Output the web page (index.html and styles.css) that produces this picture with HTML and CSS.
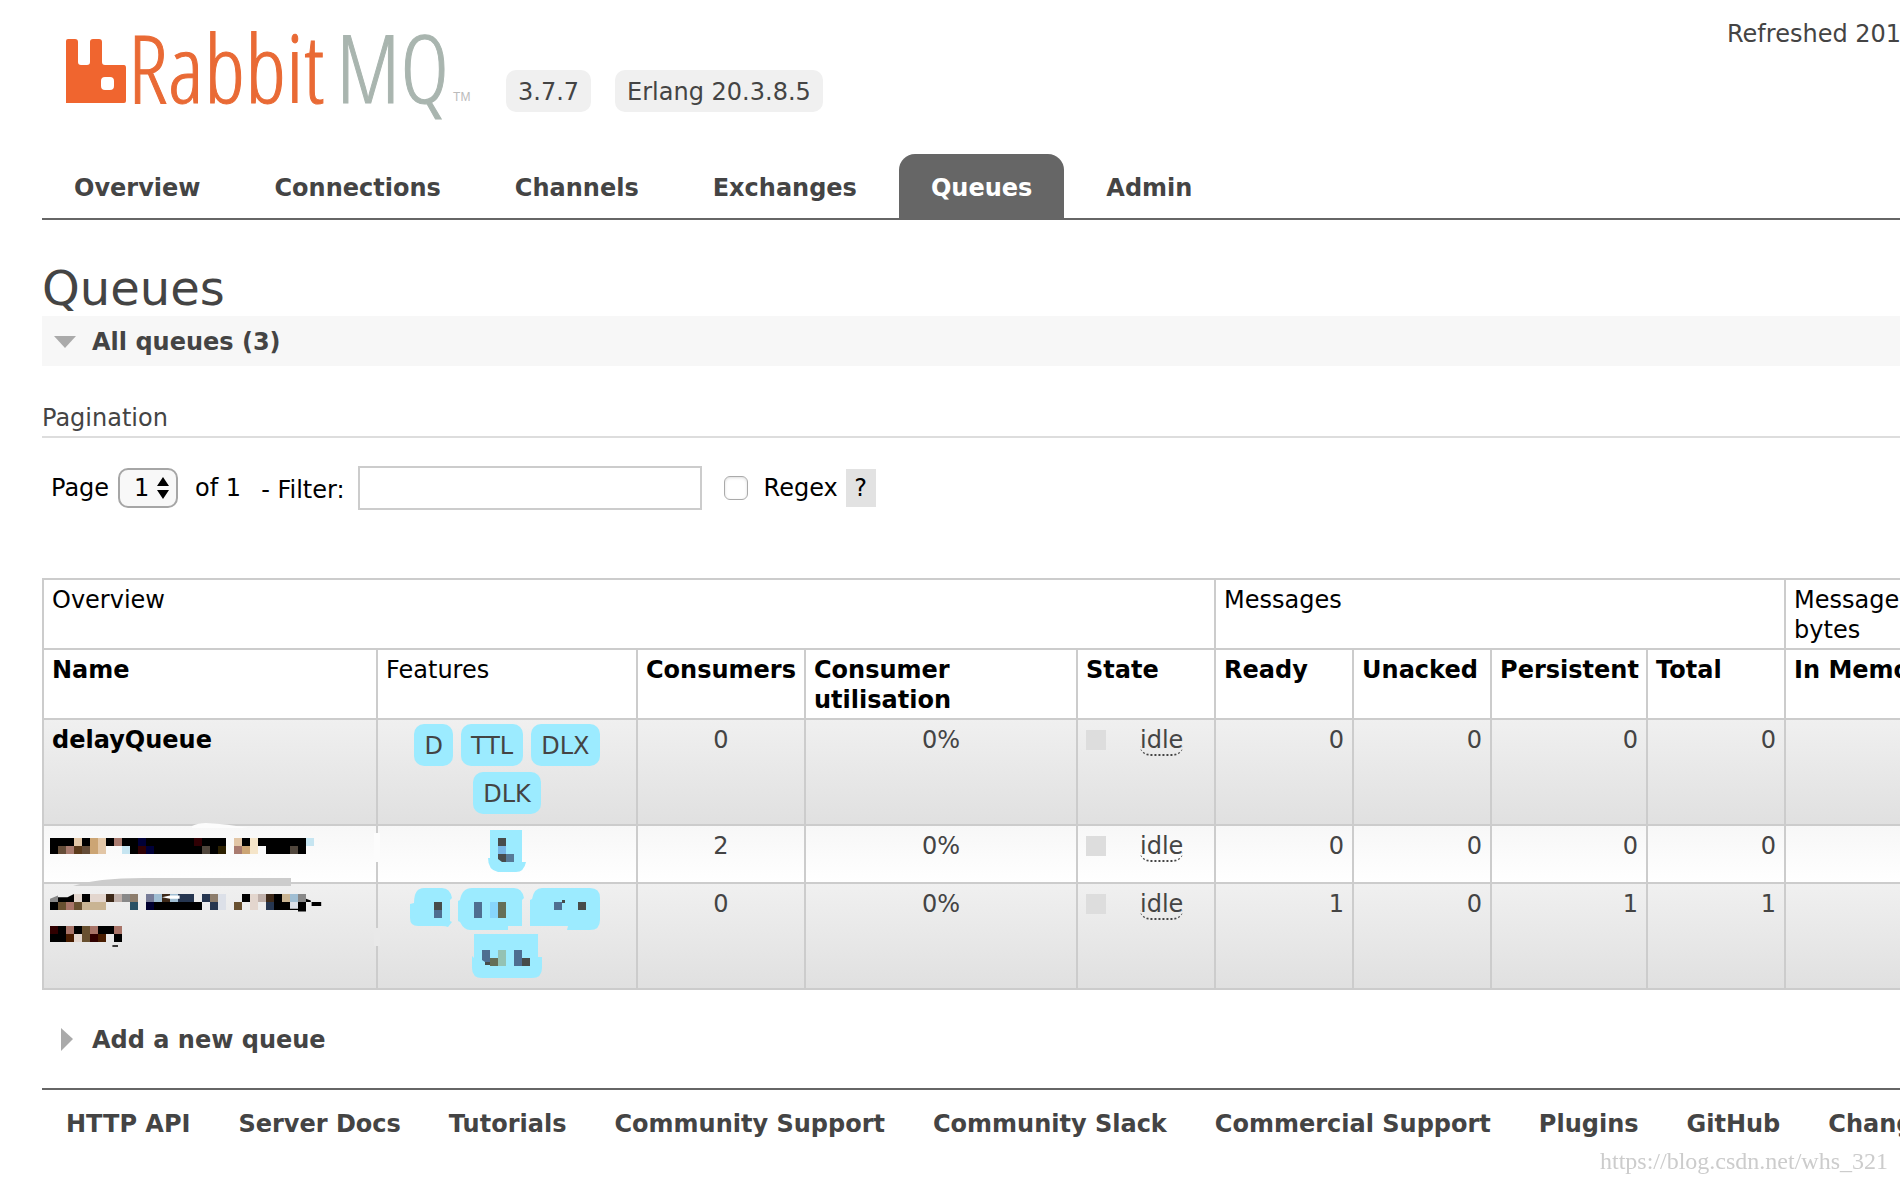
FILE: index.html
```html
<!DOCTYPE html>
<html lang="en">
<head>
<meta charset="utf-8">
<title>RabbitMQ Management</title>
<link rel="stylesheet" href="styles.css">
</head>
<body>
<header class="top">
  <a class="logo" href="#" aria-label="RabbitMQ">
    <svg class="logo-mark" viewBox="0 0 60 66" aria-hidden="true"><path fill="#f0652f" fill-rule="evenodd" d="M2 1H9Q12 1 12 4V24Q12 27 15 27H21Q24 27 24 24V4Q24 1 27 1H33Q36 1 36 4V24Q36 27 39 27H58Q60 27 60 30V63Q60 65 58 65H0V3Q0 1 2 1ZM39 39Q35 39 35 43V48Q35 52 39 52H44Q48 52 48 48V43Q48 39 44 39Z"/></svg>
    <span class="word word-rabbit">Rabbit</span><span class="word word-mq">MQ</span><span class="tm">TM</span>
  </a>
  <div class="versions"><span class="version">3.7.7</span><span class="version">Erlang 20.3.8.5</span></div>
  <div class="status">Refreshed 201</div>
</header>

<nav class="tabs">
  <a href="#">Overview</a>
  <a href="#">Connections</a>
  <a href="#">Channels</a>
  <a href="#">Exchanges</a>
  <a class="selected" href="#">Queues</a>
  <a href="#">Admin</a>
</nav>

<main>
  <h1>Queues</h1>
  <h2 class="section open"><button type="button"><svg class="arrow" viewBox="0 0 24 24" aria-hidden="true"><path fill="#aaa" d="M1 6H23L12 18Z"/></svg>All queues (3)</button></h2>

  <h3>Pagination</h3>
  <form class="filter">
    <label for="page">Page</label>
    <span class="select-box">
      <select id="page"><option>1</option></select>
      <svg viewBox="0 0 12 22" aria-hidden="true"><path d="M6 0L12 9H0ZM6 22L0 13H12Z"/></svg>
    </span>
    <span class="page-count">of 1</span>
    <label class="filter-label" for="name">- Filter:</label>
    <input class="filter-text" id="name" type="text">
    <input class="regex-box" id="regex" type="checkbox">
    <label class="regex-label" for="regex">Regex</label>
    <button class="help" type="button">?</button>
  </form>

  <table class="list">
    <colgroup>
      <col class="c-name"><col class="c-features"><col class="c-consumers"><col class="c-util"><col class="c-num"><col class="c-num"><col class="c-num"><col class="c-persistent"><col class="c-num"><col>
    </colgroup>
    <thead>
      <tr><th class="plain" colspan="5">Overview</th><th class="plain" colspan="4">Messages</th><th class="plain">Message bytes</th></tr>
      <tr><th>Name</th><th class="plain">Features</th><th>Consumers</th><th>Consumer utilisation</th><th>State</th><th>Ready</th><th>Unacked</th><th>Persistent</th><th>Total</th><th class="nowrap">In Memory</th></tr>
    </thead>
    <tbody>
      <tr class="alt">
        <td class="name"><a href="#">delayQueue</a></td>
        <td class="features"><div class="tags"><span>D</span><span>TTL</span><span>DLX</span><span>DLK</span></div></td>
        <td class="c">0</td><td class="c">0%</td>
        <td class="state"><i></i><abbr>idle</abbr></td>
        <td class="r">0</td><td class="r">0</td><td class="r">0</td><td class="r">0</td><td></td>
      </tr>
      <tr>
        <td class="hidden-name">
          <svg class="mosaic one" viewBox="0 0 33 2" aria-hidden="true" shape-rendering="crispEdges">
            <path d="M0 0H3V1H1V2H0ZM4 0H5V1H4ZM7 0H8V1H7ZM9 0H22V2H10V1H9ZM24 0H25V1H24ZM26 0H32V2H27V1H26Z"/>
            <path fill="#e2c6a6" d="M3 0H4V1H3ZM6 0H7V2H6ZM23 0H24V1H23Z"/>
            <path fill="#cca574" d="M5 0H6V2H5ZM24 1H25V2H24Z"/>
            <path fill="#f5e5c9" d="M25 0H26V2H25Z"/>
            <path fill="#a97b6f" d="M8 0H9V1H8ZM2 1H3V2H2ZM23 1H24V2H23Z"/>
            <path fill="#654d38" d="M1 1H2V2H1ZM4 1H5V2H4Z"/>
            <path fill="#5c3b1c" d="M3 1H4V2H3Z"/>
            <path fill="#000038" d="M11 0H12V1H11ZM12 1H13V2H12Z"/>
            <path fill="#300004" d="M18 0H19V1H18ZM11 1H12V2H11Z"/>
            <path fill="#50463c" d="M19 1H20V2H19ZM30 1H31V2H30Z"/>
            <path fill="#2c2000" d="M21 1H22V2H21Z"/>
            <path fill="#c6e5f1" d="M32 0H33V1H32ZM9 1H10V2H9Z"/>
          </svg>
          <svg class="cover" width="340" height="80" viewBox="0 0 340 80" aria-hidden="true">
            <path fill="#fcfcfc" d="M148 10Q154 7 162 7Q184 8 204 12H148Z"/>
            <path fill="#fcfcfc" d="M330 17H336V46H330Z"/>
            <path fill="#ccc" d="M29 70Q52 62 100 62H247V70Z"/>
          </svg>
        </td>
        <td class="features">
          <svg class="patch" width="38" height="42" viewBox="0 0 38 42" aria-hidden="true">
            <path fill="#9cebff" d="M2 0H34V32H38Q36 42 28 42H10Q0 40 0 28H2Z"/>
            <path fill="#484c4c" d="M10 8H18V16H10ZM10 24H18V32H14L10 29Z"/><path fill="#78b6e6" d="M10 16H18V24H10Z"/><path fill="#577a97" d="M18 24H26V32H18Z"/>
          </svg>
        </td>
        <td class="c">2</td><td class="c">0%</td>
        <td class="state"><i></i><abbr>idle</abbr></td>
        <td class="r">0</td><td class="r">0</td><td class="r">0</td><td class="r">0</td><td></td>
      </tr>
      <tr class="alt">
        <td class="hidden-name">
          <svg class="mosaic two" viewBox="0 0 34 7" aria-hidden="true">
            <path d="M0 2V1H1L3 0V1H1V2ZM1 .4H3V1H1ZM4 0H5V1H4ZM24 0H25V1H24ZM28 0H29V1H30V2H28ZM13 1H19V2H13ZM31 1H32V2.2H31V2H29V1.8H31ZM32 .6L32.6 .8V1H32ZM32.7 1H33.9V1.5H32.7Z"/>
            <path fill="#888" d="M0 1V.6L1 .2V1ZM9 0H10V1H9ZM31 0H32V1H31Z"/>
            <path fill="#e3d6ce" d="M3 0H4V1H3ZM5 0H7V1H5ZM25 0H26V2H25ZM3 5H4V6H3Z"/>
            <path fill="#3c2818" d="M7 0H8V1H7ZM14 0H15V1H14ZM27 0H28V1H27Z"/>
            <path fill="#bfb0aa" d="M8 0H9V1H8ZM26 0H27V1H26Z"/>
            <path fill="#8d7d6c" d="M10 0H11V1H10ZM20 0H21V1H20Z"/>
            <path fill="#777c98" d="M12 0H13V1H12Z"/>
            <path fill="#a0bed3" d="M13 0H14V1H13ZM15 0H16V1H15ZM30 0H31V1H30Z"/>
            <path fill="#263650" d="M16 0H18V1H16ZM19 0H20V1H19ZM27 1H28V2H27ZM20 1H21V2H20Z"/>
            <path fill="#dce0e8" d="M21 0H22V2H21ZM30 1H31V1.8H30Z"/>
            <path fill="#c9b493" d="M29 0H30V1H29ZM4 1H7V2H4Z"/>
            <path fill="#685030" d="M1 1H2V2H1ZM3 1H4V2H3ZM23 1H24V2H23ZM4 4H5V6H4Z"/>
            <path fill="#a87468" d="M2 1H3V2H2ZM2 4H3V5H2ZM5 4H6V5H5ZM8 4H9V5H8Z"/>
            <path fill="#285064" d="M10 1H11V2H10Z"/><path fill="#000030" d="M12 1H13V2H12Z"/>
            <path fill="#fff" d="M14 .4L15 .2H16.2V.6H15Z"/>
            <path d="M1 4H2V6H0V5H1ZM3 4H4V5H3ZM6 4H8V5H6ZM8 5H9V6H8ZM7.8 6.4H8.5V6.6H7.8Z"/>
            <path fill="#300000" d="M0 4H1V5H0ZM5 5H6V6H5Z"/><path fill="#481c00" d="M2 5H3V6H2ZM6 5H7V6H6Z"/>
          </svg>
          <svg class="cover" width="340" height="80" viewBox="0 0 340 80" aria-hidden="true"><path fill="#e9e9e9" d="M330 54H336V72H330Z"/></svg>
        </td>
        <td class="features">
          <svg class="patch" width="194" height="90" viewBox="0 0 194 90" aria-hidden="true">
            <path fill="#9cebff" d="M4 15Q4 0 14 0H32Q40 0 42 10L40 12V33L42 34L38 39Q36 38 32 38H8Q0 38 0 30V16ZM50 12Q52 0 62 0H104Q112 0 114 10L112 12V38H98V42H60Q54 42 50 34L48 33V13ZM122 11Q124 0 132 0H180Q190 0 190 10V32Q190 42 180 42H157L158 38H120V12ZM64 46H128V69H132V80Q132 90 122 90H72Q62 90 62 80V68L64 70Z"/>
            <path fill="#474c4a" d="M24 14H32V22H24ZM168 14H176V22H168ZM152 12H155V15H152ZM112 70H120V78H112ZM75 73H80V77H75Z"/>
            <path fill="#4e6e91" d="M24 22H32V30H24ZM64 14H72V30H64ZM144 14H152V22H144ZM72 62H80V74H75L72 72ZM104 62H112V78H104Z"/>
            <path fill="#87d5fa" d="M80 14H88V30H80Z"/><path fill="#656f57" d="M88 14H96V30H88ZM80 70H88V78H80Z"/><path fill="#94c2b4" d="M88 62H96V78H88Z"/>
          </svg>
        </td>
        <td class="c">0</td><td class="c">0%</td>
        <td class="state"><i></i><abbr>idle</abbr></td>
        <td class="r">1</td><td class="r">0</td><td class="r">1</td><td class="r">1</td><td></td>
      </tr>
    </tbody>
  </table>

  <h2 class="section add"><button type="button"><svg class="arrow" viewBox="0 0 24 24" aria-hidden="true"><path fill="#aaa" d="M8 0L20 11L8 23Z"/></svg>Add a new queue</button></h2>
</main>

<footer>
  <a href="#">HTTP API</a>
  <a href="#">Server Docs</a>
  <a href="#">Tutorials</a>
  <a href="#">Community Support</a>
  <a href="#">Community Slack</a>
  <a href="#">Commercial Support</a>
  <a href="#">Plugins</a>
  <a href="#">GitHub</a>
  <a href="#">Changelog</a>
</footer>
<div class="watermark">https://blog.csdn.net/whs_321</div>
</body>
</html>
```
FILE: styles.css
```css
* { box-sizing: border-box; }
html { overflow: hidden; }
body {
  margin: 0;
  padding-left: 42px;
  overflow: hidden;
  background: #fff;
  color: #444;
  font: 24px/30px Verdana, "DejaVu Sans", sans-serif;
}
a { color: inherit; text-decoration: none; }
button, input, select { font: inherit; color: inherit; margin: 0; }
button { border: 0; padding: 0; background: none; }

.top { display: flex; align-items: flex-start; height: 154px; padding-left: 24px; }
.logo { display: flex; align-items: flex-start; width: 440px; padding-top: 38px; }
.logo-mark { flex: none; width: 60px; height: 66px; margin-right: 2px; }
.word { font: 300 94px/58px "Open Sans Condensed Light", "Open Sans Condensed", Lato, sans-serif; -webkit-text-stroke: 1px currentColor; }
.word-rabbit { color: #e96a35; }
.word-mq { margin-left: 12px; color: #a9b5af; }
.tm { align-self: flex-end; margin-left: 4px; color: #bbb; font: 12px/14px "Liberation Sans", sans-serif; }
.versions { display: flex; gap: 24px; padding-top: 70px; }
.version { padding: 7px 12px 5px; border-radius: 10px; background: #f0f0f0; white-space: nowrap; }
.status { width: 173px; margin-left: auto; padding-top: 19px; white-space: nowrap; }

.tabs { display: flex; gap: 10px; border-bottom: 2px solid #666; }
.tabs a { padding: 19px 32px 15px; border-radius: 16px 16px 0 0; font-weight: bold; }
.tabs .selected { background: #666; color: #fff; }

h1 { margin: 41px 0 0; font-size: 48px; line-height: 55px; font-weight: normal; }
.section { margin: 0; font-size: 24px; line-height: 30px; }
.section button { display: flex; align-items: center; gap: 15px; width: 100%; padding: 11px 11px 9px; font-weight: bold; }
.section.open { background: #f7f7f7; }
.section.add { margin: 24px 0; }
.arrow { width: 24px; height: 24px; }
h3 { margin: 37px 0 0; padding-bottom: 3px; border-bottom: 2px solid #ddd; font-size: 24px; line-height: 30px; font-weight: normal; }

.filter { display: flex; align-items: center; margin: 28px 0 68px; padding-left: 9px; color: #000; }
.select-box { display: block; position: relative; margin: 0 17px 0 9px; }
.select-box select { display: block; width: 60px; height: 40px; padding: 0 0 0 14px; border: 2px solid #a6a6a6; border-radius: 10px; background: #f8f8f8; appearance: none; }
.select-box svg { position: absolute; top: 9px; right: 9px; width: 12px; height: 22px; pointer-events: none; }
.page-count { margin-right: 20px; }
.filter-label { padding-top: 3px; }
.filter-text { width: 344px; height: 44px; margin: 0 22px 0 13px; padding: 4px 8px; border: 2px solid #ccc; background: #fff; }
.regex-box { width: 24px; height: 24px; border: 1px solid #aaa; border-radius: 6px; background: #fff; box-shadow: inset 0 1px 3px #ddd; appearance: none; }
.regex-label { margin: 0 8px 0 16px; }
.help { width: 30px; height: 38px; background: #e2e2e2; }

.list { width: calc(100% + 56px); table-layout: fixed; border-collapse: collapse; }
.c-name { width: 334px; }
.c-features { width: 260px; }
.c-consumers { width: 168px; }
.c-util { width: 272px; }
.c-num { width: 138px; }
.c-persistent { width: 156px; }
th, td { padding: 5px 8px 3px; border: 2px solid #ccc; text-align: left; vertical-align: top; }
th { color: #000; }
.plain { font-weight: normal; }
.nowrap { white-space: nowrap; }
tbody tr { background: linear-gradient(#f7f7f7, #fff); }
tbody .alt { background: linear-gradient(#f0f0f0, #e0e0e0); }
.name { color: #000; font-weight: bold; }
.features { padding-top: 4px; padding-bottom: 10px; }
.tags { display: flex; flex-wrap: wrap; justify-content: center; gap: 6px 8px; }
.tags span { padding: 7px 10px 5px; border-radius: 10px; background: #9cebff; }
.patch { display: block; margin: 0 auto; }
.c { text-align: center; }
.r { text-align: right; }
.state i { display: inline-block; width: 20px; height: 20px; margin-right: 34px; background: #ddd; vertical-align: -2px; }
.state abbr { border-bottom: 2px dotted #444; border-radius: 10px; }
.hidden-name { position: relative; padding-top: 4px; padding-left: 6px; }
.mosaic { display: block; }
.mosaic.one { width: 264px; height: 16px; margin-top: 8px; }
.mosaic.two { width: 272px; height: 56px; margin-top: 6px; }
.cover { position: absolute; left: 0; top: -10px; pointer-events: none; }

footer { display: flex; gap: 48px; padding: 19px 0 0 24px; border-top: 2px solid #666; font-weight: bold; white-space: nowrap; }
.watermark { position: fixed; right: 12px; bottom: 7px; color: #ccc; font: 24px/28px "Liberation Serif", serif; }
```
